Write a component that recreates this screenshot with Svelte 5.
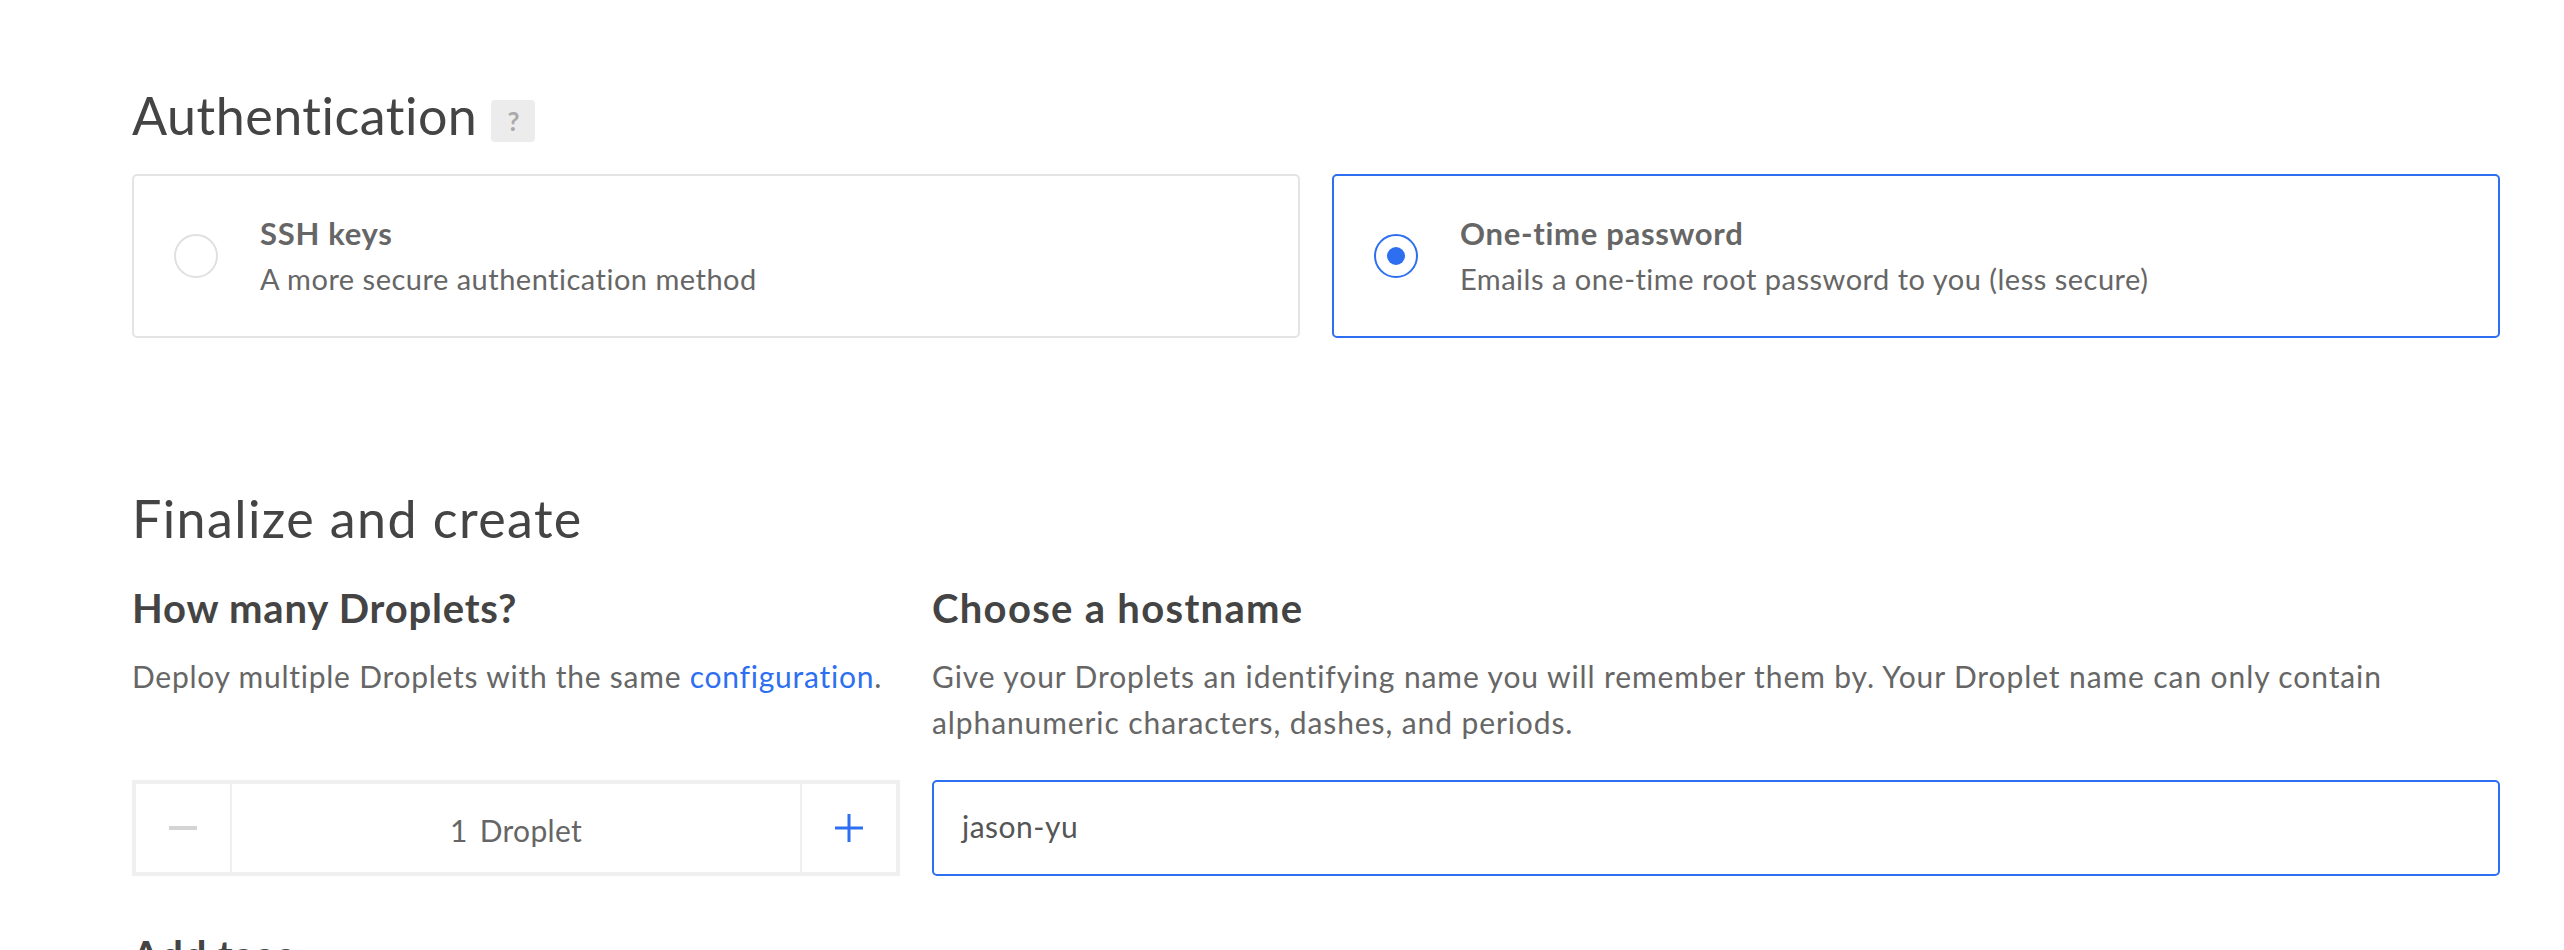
<script>
	const authOptions = [
		{ title: 'SSH keys', description: 'A more secure authentication method', selected: false },
		{ title: 'One-time password', description: 'Emails a one-time root password to you (less secure)', selected: true }
	];
</script>

<div class="page">
	<div class="section-title auth-title">
		<h2>Authentication</h2>
		<span class="help">?</span>
	</div>

	<div class="auth-options">
		{#each authOptions as option}
			<div class="auth-card" class:selected={option.selected}>
				<span class="radio"></span>
				<div class="auth-text">
					<h4>{option.title}</h4>
					<p>{option.description}</p>
				</div>
			</div>
		{/each}
	</div>

	<div class="section-title finalize-title">
		<h2>Finalize and create</h2>
	</div>

	<div class="finalize">
		<div class="count-col">
			<h3>How many Droplets?</h3>
			<p class="desc">Deploy multiple Droplets with the same <a href="#config">configuration</a>.</p>
			<div class="stepper">
				<div class="step">
					<svg width="28" height="24" viewBox="0 0 28 24"><path d="M0 12h28" stroke="#d4d4d4" stroke-width="4" /></svg>
				</div>
				<div class="count"><span>1</span><span>Droplet</span></div>
				<div class="step">
					<svg width="28" height="28" viewBox="0 0 28 28"><path d="M0 14h28M14 0v28" stroke="#2d6ff0" stroke-width="3" /></svg>
				</div>
			</div>
		</div>
		<div class="host-col">
			<h3>Choose a hostname</h3>
			<p class="desc">Give your Droplets an identifying name you will remember them by. Your Droplet name can only contain alphanumeric characters, dashes, and periods.</p>
			<div class="host-input">jason-yu</div>
		</div>
	</div>

	<h3 class="tags">Add tags</h3>
</div>

<style>
	:global(body) {
		overflow: hidden;
		background: #fff;
	}

	.page {
		box-sizing: border-box;
		width: 2564px;
		height: 950px;
		overflow: hidden;
		padding: 83px 64px 0 132px;
		font-family: Lato, "Liberation Sans", sans-serif;
		font-variant-ligatures: none;
		color: #444;
	}

	h2,
	h3,
	h4,
	p {
		margin: 0;
	}

	.section-title {
		display: flex;
		align-items: center;
		gap: 14px;
	}

	h2 {
		font-size: 52px;
		line-height: 64px;
		font-weight: 400;
		letter-spacing: 0.5px;
		color: #444;
	}

	.finalize-title h2 {
		letter-spacing: 1.4px;
	}

	.help {
		display: flex;
		align-items: center;
		justify-content: center;
		width: 44px;
		height: 42px;
		margin-top: 12px;
		border-radius: 4px;
		background: #ececec;
		color: #aaa;
		font-size: 26px;
		font-weight: 700;
	}

	.auth-options {
		display: grid;
		grid-template-columns: 1fr 1fr;
		gap: 32px;
		margin-top: 27px;
	}

	.auth-card {
		box-sizing: border-box;
		display: flex;
		align-items: center;
		gap: 42px;
		height: 164px;
		padding-left: 40px;
		border: 2px solid #e4e4e4;
		border-radius: 5px;
	}

	.auth-card.selected {
		border-color: #2d6ff0;
	}

	.radio {
		box-sizing: border-box;
		display: flex;
		align-items: center;
		justify-content: center;
		width: 44px;
		height: 44px;
		border: 2px solid #e0e0e0;
		border-radius: 50%;
	}

	.selected .radio {
		border-color: #2d6ff0;
	}

	.selected .radio::after {
		content: '';
		width: 18px;
		height: 18px;
		border-radius: 50%;
		background: #2d6ff0;
	}

	h4 {
		font-size: 31px;
		line-height: 40px;
		font-weight: 700;
		letter-spacing: 0.7px;
		color: #666;
	}

	.auth-text p {
		margin-top: 6px;
		font-size: 29px;
		line-height: 40px;
		letter-spacing: 0.5px;
		color: #666;
	}

	.finalize-title {
		margin-top: 148px;
	}

	.finalize {
		display: grid;
		grid-template-columns: 768px 1fr;
		gap: 32px;
		margin-top: 33px;
	}

	h3 {
		font-size: 40px;
		line-height: 50px;
		font-weight: 700;
		letter-spacing: 0.8px;
		color: #444;
	}

	.host-col h3 {
		letter-spacing: 1.3px;
	}

	.desc {
		height: 92px;
		margin-top: 20px;
		font-size: 30px;
		line-height: 46px;
		letter-spacing: 0.75px;
		color: #666;
	}

	.host-col .desc {
		letter-spacing: 0.9px;
	}

	.desc a {
		color: #2d6ff0;
		text-decoration: none;
	}

	.stepper {
		box-sizing: border-box;
		display: flex;
		height: 96px;
		margin-top: 35px;
		border: 4px solid #f0f0f0;
	}

	.step {
		display: flex;
		align-items: center;
		justify-content: center;
		width: 94px;
		flex: none;
	}

	.count {
		flex: 1;
		display: flex;
		align-items: center;
		justify-content: center;
		gap: 12px;
		padding-top: 4px;
		border-left: 2px solid #f0f0f0;
		border-right: 2px solid #f0f0f0;
		font-size: 30px;
		letter-spacing: 0.3px;
		color: #666;
	}

	.host-input {
		box-sizing: border-box;
		display: flex;
		align-items: center;
		height: 96px;
		margin-top: 35px;
		padding: 0 0 4px 28px;
		border: 2px solid #2d6ff0;
		border-radius: 5px;
		font-size: 30px;
		letter-spacing: 0.5px;
		color: #555;
	}

	.tags {
		margin-top: 54px;
	}
</style>
